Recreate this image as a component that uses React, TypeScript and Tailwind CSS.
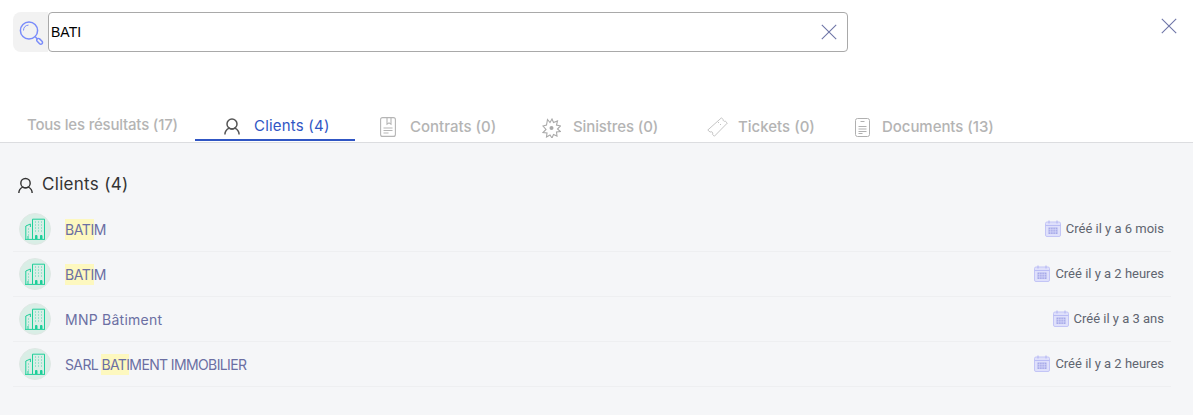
const poppins = "font-['Inter','Noto_Sans',sans-serif]";

function SearchIcon() {
  return (
    <svg width="26" height="26" viewBox="0 0 26 26" fill="none" stroke="#7a8cfa" strokeWidth="1.5">
      <circle cx="11" cy="10.5" r="8.6" />
      <path d="M5.5 10.5a5.5 5.5 0 0 1 5-5.4" strokeWidth="1" />
      <path d="M17.4 17l1.8 1.8" />
      <rect x="-3.4" y="-1.7" width="6.8" height="3.4" rx="1.7" transform="translate(21.6 21.3) rotate(45)" />
    </svg>
  );
}

function CloseIcon({ size }: { size: number }) {
  return (
    <svg width={size} height={size} viewBox="0 0 16 16" fill="none" stroke="#6f76a8" strokeWidth="1.1">
      <path d="M.8.8l14.4 14.4M15.2.8L.8 15.2" />
    </svg>
  );
}

function UserIcon({ color, width = 16 }: { color: string; width?: number }) {
  return (
    <svg width={width} height="17" viewBox="0 0 16 17" fill="none" stroke={color} strokeWidth="1.5">
      <circle cx="8" cy="6" r="5" />
      <path d="M.9 16.5c0-3.2 1.5-5 4.2-6.4 1.6 1 4.2 1 5.8 0 2.7 1.4 4.2 3.2 4.2 6.4" />
    </svg>
  );
}

function ContractIcon() {
  return (
    <svg width="16" height="20" viewBox="0 0 16 20" fill="none" stroke="#b5b5b5" strokeWidth="1.1">
      <rect x=".6" y=".6" width="14.8" height="18.8" rx="2" />
      <path d="M7 .8v6.4l2-1.4 2 1.4V.8M3.5 11h9M3.5 13.5h9M3.5 16h5" />
    </svg>
  );
}

function ClaimIcon() {
  return (
    <svg width="19" height="20" viewBox="0 0 19 20" fill="none" stroke="#a9a9a9" strokeWidth="1.1">
      <path d="M5.5 1.5l2.5 3 2-3.5 1.5 3.5 4-1.5-1 4 4 1-3 3 3 2.5-4 .5.5 4-3.5-1.5-1.5 3.5-2-3-3.5 2 .5-4-4-.5 3-3L1 8l3.5-1z" />
      <circle cx="9.5" cy="10" r="2" fill="#a9a9a9" stroke="none" />
    </svg>
  );
}

function TicketIcon() {
  return (
    <svg width="21" height="20" viewBox="0 0 21 20" fill="none" stroke="#bdbdbd" strokeWidth=".9">
      <path d="M14.5.8l1.6 1.8a1.6 1.6 0 0 0 2.2 1.6l2 1.9L7.4 19.2l-2-1.9a1.6 1.6 0 0 0-2.3-2.2L.8 13z" />
      <path d="M11 5l1 1M13 7l1 1" />
    </svg>
  );
}

function DocumentIcon() {
  return (
    <svg width="15" height="19" viewBox="0 0 15 19" fill="none" stroke="#b0b0b0" strokeWidth="1">
      <rect x=".5" y=".5" width="14" height="18" rx="2" />
      <path d="M5.5 3.5h4M3.5 8.5h8M3.5 11h8M3.5 13.5h8M3.5 15.5h4" />
    </svg>
  );
}

function BuildingIcon() {
  return (
    <svg width="20" height="22" viewBox="0 0 20 22" fill="none" stroke="#1fcf9a" strokeWidth="1">
      <path d="M7.5 21V1.2h12V21" />
      <path d="M.8 21V8l4.6-2v3" />
      <path d="M10 4h1.5M13 4h1.5M16 4h1.5M10 7h1.5M13 7h1.5M16 7h1.5M10 10h1.5M13 10h1.5M16 10h1.5M10 13h1.5M13 13h1.5M16 13h1.5M3 11h2M3 14h2M3 17h2" strokeDasharray="1 1" strokeOpacity=".7" />
      <path d="M3 21v-3M10.5 21v-3.5h1.5V21M15.5 21v-3.5H17V21" fill="#1fcf9a" stroke="#1fcf9a" />
      <path d="M0 21.4h20" />
    </svg>
  );
}

function CalendarIcon() {
  return (
    <svg width="16" height="17" viewBox="0 0 16 17" className="shrink-0 -mt-[1px]">
      <rect x=".5" y="2" width="15" height="14.5" rx="1.5" fill="#dfe0fb" stroke="#c3c5f6" />
      <path d="M.5 5.5h15" stroke="#b9bcf4" />
      <path d="M4 .5v3M12 .5v3" stroke="#b0b3f2" />
      <rect x="3.5" y="7.5" width="9" height="6.5" fill="#a6a9e9" />
      <path d="M3.5 9.7h9M3.5 11.9h9M5.7 7.5V14M8 7.5V14M10.3 7.5V14" stroke="#dfe0fb" strokeWidth=".6" />
    </svg>
  );
}

function Mark({ children }: { children: string }) {
  return <span className="bg-[#fdf8bf] py-[2px]">{children}</span>;
}

const rows = [
  { name: <><Mark>BATI</Mark>M</>, tracking: "tracking-[-0.4px]", date: "Créé il y a 6 mois" },
  { name: <><Mark>BATI</Mark>M</>, tracking: "tracking-[-0.4px]", date: "Créé il y a 2 heures" },
  { name: <>MNP Bâtiment</>, tracking: "tracking-[0.25px]", date: "Créé il y a 3 ans" },
  { name: <>SARL <Mark>BATI</Mark>MENT IMMOBILIER</>, tracking: "tracking-[-0.62px]", date: "Créé il y a 2 heures" },
];

export default function App() {
  return (
    <div className="w-[1193px] h-[415px] overflow-hidden flex flex-col bg-white">
      <div className="h-[143px] shrink-0 border-b border-[#dcdde0] flex flex-col">
        <div className="flex items-start pl-[13px] pt-3 pr-[16px]">
          <div className="w-[35px] h-10 bg-[#f2f2f2] rounded-l-lg flex items-center justify-center pt-[1px]">
            <SearchIcon />
          </div>
          <div className="w-[800px] h-10 border border-[#a9a9a9] rounded flex items-center justify-between pl-[2px] pr-[10px]">
            <span className="font-['Liberation_Sans',sans-serif] text-[14px] text-black">BATI</span>
            <CloseIcon size={16} />
          </div>
          <div className="ml-auto mt-[6px]">
            <CloseIcon size={16} />
          </div>
        </div>
        <div className={`mt-auto mb-[1px] flex items-end ${poppins} text-[15px] font-medium text-[#b4b4b4]`}>
          <div className="ml-[27px] w-[168px] h-[30px] leading-[28px] tracking-[-0.2px]">Tous les résultats (17)</div>
          <div className="w-[160px] h-[30px] border-b-2 border-[#3056c4] pl-[29px] flex items-start gap-[14px] text-[#3056c4] font-normal">
            <span className="mt-[7px]"><UserIcon color="#555" /></span>
            <span className="leading-[29px] tracking-[0.2px]">Clients (4)</span>
          </div>
          <div className="w-[187px] h-[30px] pl-[25px] flex items-start gap-[14px]">
            <span className="mt-[6px]"><ContractIcon /></span>
            <span className="leading-[31px]">Contrats (0)</span>
          </div>
          <div className="w-[165px] h-[30px] flex items-start gap-[12px]">
            <span className="mt-[7px]"><ClaimIcon /></span>
            <span className="leading-[31px] tracking-[-0.1px]">Sinistres (0)</span>
          </div>
          <div className="w-[148px] h-[30px] flex items-start gap-[10px]">
            <span className="mt-[6px]"><TicketIcon /></span>
            <span className="leading-[31px]">Tickets (0)</span>
          </div>
          <div className="h-[30px] flex items-start gap-[12px]">
            <span className="mt-[7px]"><DocumentIcon /></span>
            <span className="leading-[31px] tracking-[-0.05px]">Documents (13)</span>
          </div>
        </div>
      </div>
      <div className="flex-1 bg-[#f5f6f8] pl-[13px] pr-[22px]">
        <div className={`flex items-center gap-[9px] pl-[5px] mt-[32px] h-5 ${poppins} text-[17px] tracking-[0.3px] text-[#333]`}>
          <UserIcon color="#333" width={15} />
          <span>Clients (4)</span>
        </div>
        <div className="mt-[12px]">
          {rows.map((row, i) => (
            <div key={i} className="h-[45px] border-b border-[#eeeff1] flex items-center pl-[6px] pr-[7px]">
              <div className="w-8 h-8 rounded-full bg-[#d9eee6] border border-[#e0e8e5] flex items-center justify-center">
                <BuildingIcon />
              </div>
              <div className={`ml-[14px] font-['Inter',sans-serif] text-[14px] text-[#6b6fa3] ${row.tracking}`}>{row.name}</div>
              <div className="ml-auto flex items-center gap-[5px] font-['Roboto',sans-serif] text-[13px] text-[#5f6570]">
                <CalendarIcon />
                <span>{row.date}</span>
              </div>
            </div>
          ))}
        </div>
      </div>
    </div>
  );
}
